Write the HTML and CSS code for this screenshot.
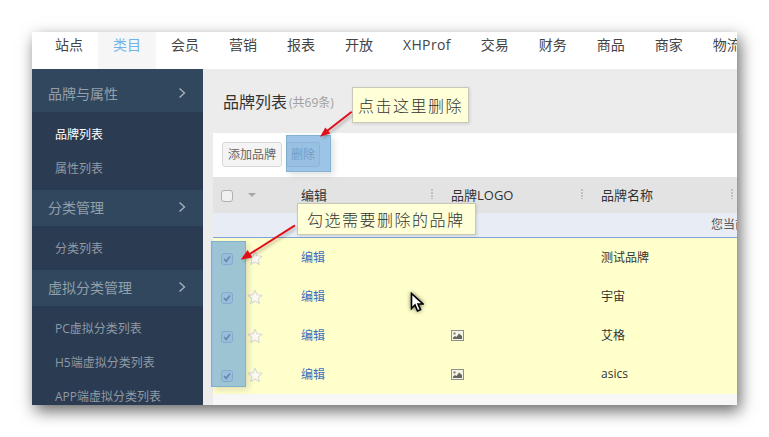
FILE: index.html
```html
<!DOCTYPE html>
<html lang="zh-CN">
<head>
<meta charset="utf-8">
<title>品牌列表</title>
<link rel="stylesheet" href="styles.css">
</head>
<body>
<svg class="defs" width="0" height="0" aria-hidden="true">
  <symbol id="chev" viewBox="0 0 8 12"><path d="M1.5 1.500 6.500 6l-5 4.500" fill="none" stroke="currentColor" stroke-width="1.400"/></symbol>
  <symbol id="star" viewBox="0 0 16 16"><path d="M8 1.200l2 4.600 5 .5-3.800 3.300 1.200 4.900L8 12l-4.400 2.500 1.200-4.900L1 6.300l5-.5z" fill="#fbfbf0" stroke="#d9d9d6" stroke-width="1.100" stroke-linejoin="round"/></symbol>
  <symbol id="pic" viewBox="0 0 13 11"><rect x=".5" y=".5" width="12" height="10" fill="#f5f5e6" stroke="#8f8f8a"/><path d="M2 9V7.500L4 6l1.500 1L8 3.500 11 6v3z" fill="#66665f"/><rect x="2.500" y="2.500" width="2" height="2" fill="#77776f"/></symbol>
  <symbol id="check" viewBox="0 0 12 12"><path d="M2.500 6 5 8.800 9.500 3" fill="none" stroke="#666" stroke-width="2"/></symbol>
</svg>
<div class="window">
  <nav class="topnav">
    <a class="tab">站点</a>
    <a class="tab tab-active">类目</a>
    <a class="tab">会员</a>
    <a class="tab">营销</a>
    <a class="tab">报表</a>
    <a class="tab">开放</a>
    <a class="tab tab-latin">XHProf</a>
    <a class="tab">交易</a>
    <a class="tab">财务</a>
    <a class="tab">商品</a>
    <a class="tab">商家</a>
    <a class="tab">物流</a>
  </nav>
  <div class="body">
    <aside class="sidebar">
      <div class="group group-first"><span>品牌与属性</span><svg class="chev"><use href="#chev"/></svg></div>
      <ul class="sublist">
        <li class="sub-current">品牌列表</li>
        <li>属性列表</li>
      </ul>
      <div class="group"><span>分类管理</span><svg class="chev"><use href="#chev"/></svg></div>
      <ul class="sublist">
        <li>分类列表</li>
      </ul>
      <div class="group"><span>虚拟分类管理</span><svg class="chev"><use href="#chev"/></svg></div>
      <ul class="sublist">
        <li>PC虚拟分类列表</li>
        <li>H5端虚拟分类列表</li>
        <li>APP端虚拟分类列表</li>
      </ul>
    </aside>
    <main class="main">
      <header class="title"><h1>品牌列表</h1><small>(共69条)</small></header>
      <section class="panel">
        <div class="toolbar">
          <button class="btn">添加品牌</button>
          <button class="btn btn-muted">删除</button>
        </div>
        <div class="row head">
          <div class="lead"><span class="box"></span><i class="caret"></i></div>
          <div class="cell">编辑<i class="grip"></i></div>
          <div class="cell">品牌LOGO<i class="grip"></i></div>
          <div class="cell">品牌名称<i class="grip"></i></div>
        </div>
        <div class="info">您当前</div>
        <div class="rows">
          <div class="row item">
            <div class="lead"><span class="box box-on"><svg><use href="#check"/></svg></span><svg class="star"><use href="#star"/></svg></div>
            <div class="cell"><a class="link">编辑</a></div><div class="cell"></div><div class="cell">测试品牌</div>
          </div>
          <div class="row item">
            <div class="lead"><span class="box box-on"><svg><use href="#check"/></svg></span><svg class="star"><use href="#star"/></svg></div>
            <div class="cell"><a class="link">编辑</a></div><div class="cell"></div><div class="cell">宇宙</div>
          </div>
          <div class="row item">
            <div class="lead"><span class="box box-on"><svg><use href="#check"/></svg></span><svg class="star"><use href="#star"/></svg></div>
            <div class="cell"><a class="link">编辑</a></div><div class="cell"><svg class="pic"><use href="#pic"/></svg></div><div class="cell">艾格</div>
          </div>
          <div class="row item">
            <div class="lead"><span class="box box-on"><svg><use href="#check"/></svg></span><svg class="star"><use href="#star"/></svg></div>
            <div class="cell"><a class="link">编辑</a></div><div class="cell"><svg class="pic"><use href="#pic"/></svg></div><div class="cell">asics</div>
          </div>
        </div>
      </section>
    </main>
  </div>

  <div class="mark mark-delete"></div>
  <div class="mark mark-checks"></div>
  <div class="note note-delete">点击这里删除</div>
  <div class="note note-checks">勾选需要删除的品牌</div>
  <svg class="arrows" viewBox="0 0 705 373" aria-hidden="true">
    <g class="arrow-shadow">
      <path d="M320 83 291 106" stroke="#000" stroke-width="2.500" fill="none"/>
      <path d="M264 196 212 229" stroke="#000" stroke-width="2.500" fill="none"/>
    </g>
    <path d="M319.700 79.700 295 99" stroke="#e0101a" stroke-width="2" fill="none"/>
    <path d="M288 104.700 293.400 95.400 298.400 101.600z" fill="#e0101a"/>
    <path d="M263 193.300 217 222.500" stroke="#e0101a" stroke-width="2" fill="none"/>
    <path d="M208.700 227.700 215.600 218 220.400 225.600z" fill="#e0101a"/>
  </svg>
  <svg class="pointer" viewBox="0 0 14 21" aria-hidden="true">
    <path d="M1.500 1.500v15l3.500-3.500 2.500 6 3-1.300-2.500-5.700H13z" fill="#fff" stroke="#000" stroke-width="1.600"/>
  </svg>
</div>
</body>
</html>
```
FILE: styles.css
```css
* { box-sizing: border-box; }
html, body { margin: 0; height: 100%; background: #fff; overflow: hidden; }
body { padding: 32px; font-family: "Open Sans", "Noto Sans CJK SC", sans-serif; color: #333; }
.defs { position: absolute; }

.window {
  position: relative;
  width: 705px;
  height: 373px;
  display: flex;
  flex-direction: column;
  background: #ececec;
  box-shadow: 3px 6px 15px rgba(0, 0, 0, .6);
}

.topnav {
  flex: none;
  height: 37px;
  padding-left: 8px;
  display: flex;
  background: #fff;
  overflow: hidden;
}
.tab {
  flex: none;
  padding: 0 15px;
  font-size: 14px;
  line-height: 26px;
  color: #444;
  white-space: nowrap;
}
.tab-active { background: #f6f6f6; color: #6fb3e8; }
.tab-latin { letter-spacing: .35px; }

.body { flex: 1; display: flex; min-height: 0; overflow: hidden; }

.sidebar { flex: none; width: 171px; background: #2a3b52; color: #8f9aa5; overflow: hidden; }
.group {
  height: 36px;
  padding: 0 16px 2px;
  display: flex;
  align-items: center;
  justify-content: space-between;
  background: #31475e;
  font-size: 14px;
  color: #93a0ab;
}
.group-first { height: 43px; padding-top: 7px; }
.chev { width: 8px; height: 12px; margin-right: 1px; color: #a4afb8; }
.sublist { list-style: none; margin: 0; padding: 5px 0; }
.sublist li { height: 34px; padding-left: 23px; font-size: 12px; line-height: 36px; white-space: nowrap; }
.sublist .sub-current { color: #fff; }

.main { flex: 1; min-width: 0; padding-left: 10px; display: flex; flex-direction: column; }
.title { flex: none; height: 64px; padding: 0 0 1px 10px; display: flex; align-items: center; gap: 2px; }
.title h1 { margin: 0; font-size: 16px; font-weight: 400; color: #333; }
.title small { font-size: 12px; color: #a0a0a0; margin-top: 2px; }

.panel { flex: 1; background: #f7f7f7; overflow: hidden; }
.toolbar { height: 44px; padding: 9px 9px 0; display: flex; gap: 4px; align-items: flex-start; background: #fff; }
.btn {
  height: 25px;
  padding: 0 5px;
  border: 1px solid #d8d8d8;
  border-radius: 3px;
  background: #f4f4f4;
  font: 12px/1 "Open Sans", "Noto Sans CJK SC", sans-serif;
  color: #666;
  white-space: nowrap;
}
.btn-muted { padding: 0 4px; width: 34px; color: #99a; }

.row { display: grid; grid-template-columns: 88px 150px 150px 150px; align-items: center; }
.head { height: 36px; background: #e3e3e3; font-size: 13px; color: #333; }
.item { height: 39px; font-size: 12px; color: #333; }
.lead { padding-left: 8px; display: flex; align-items: center; gap: 15px; }
.cell { position: relative; padding-bottom: 2px; white-space: nowrap; }
.box { flex: none; display: block; width: 12px; height: 12px; margin-top: 2px; border: 1px solid #b0b0b0; border-radius: 3px; background: #f0f0f0; }
.box svg { display: block; width: 10px; height: 10px; }
.box-on { margin-top: 3px; border-color: #bbb; background: #f3f0e2; }
.caret { width: 0; height: 0; border: 4px solid transparent; border-top: 4px solid #a8a8a8; border-bottom: 0; }
.grip { position: absolute; right: 18px; top: 4px; width: 2px; height: 10px; background: repeating-linear-gradient(#c0c0c0 0 2px, transparent 2px 3px); }
.star { width: 16px; height: 16px; margin: 0 0 0 -1px; }
.link { color: #3a6fc0; }
.pic { display: block; width: 13px; height: 11px; margin-top: 2px; }

.info { height: 25px; padding-left: 498px; font-size: 12px; line-height: 24px; white-space: nowrap; color: #555; background: #e8edf5; border-bottom: 1px solid #7fa3d8; }
.rows { background: #ffffcc; }

.mark { position: absolute; background: rgba(95, 160, 215, .62); border: 1px solid rgba(120, 170, 200, .7); box-shadow: 3px 3px 6px rgba(0, 0, 0, .12); }
.mark-delete { left: 254px; top: 103px; width: 45px; height: 37px; }
.mark-checks { left: 179px; top: 209px; width: 35px; height: 146px; }

.note {
  position: absolute;
  display: flex;
  align-items: center;
  background: #ffffd8;
  border: 1px solid #c8c8b8;
  font-size: 16px;
  font-weight: 300;
  letter-spacing: 1.5px;
  color: #333;
  white-space: nowrap;
  box-shadow: 1px 1px 3px rgba(0, 0, 0, .12);
}
.note-delete { left: 320px; top: 55px; width: 117px; height: 36px; padding-left: 5px; }
.note-checks { left: 265px; top: 171px; width: 179px; height: 32px; padding-left: 9px; }

.arrows { position: absolute; inset: 0; width: 705px; height: 373px; pointer-events: none; }
.arrow-shadow { opacity: .22; filter: blur(1.5px); }
.pointer { position: absolute; left: 378px; top: 260px; width: 14px; height: 21px; filter: drop-shadow(0 0 2px rgba(0, 0, 0, .6)); }
```
